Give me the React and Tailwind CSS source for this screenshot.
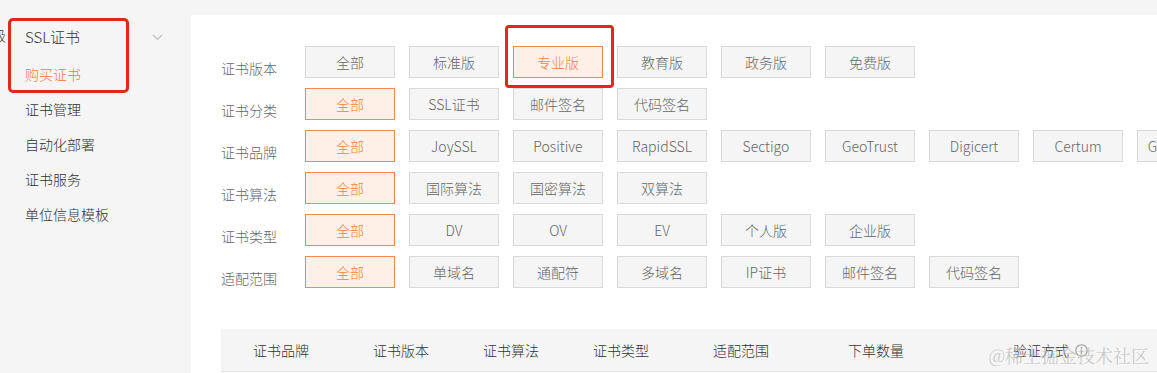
import React from "react";

const FONT = { fontFamily: '"Noto Sans CJK SC", "Noto Sans", sans-serif' };

const rows = [
  { label: "证书版本", items: ["全部", "标准版", "专业版", "教育版", "政务版", "免费版"], active: 2 },
  { label: "证书分类", items: ["全部", "SSL证书", "邮件签名", "代码签名"], active: 0 },
  { label: "证书品牌", items: ["全部", "JoySSL", "Positive", "RapidSSL", "Sectigo", "GeoTrust", "Digicert", "Certum", "GlobalSign"], active: 0 },
  { label: "证书算法", items: ["全部", "国际算法", "国密算法", "双算法"], active: 0 },
  { label: "证书类型", items: ["全部", "DV", "OV", "EV", "个人版", "企业版"], active: 0 },
  { label: "适配范围", items: ["全部", "单域名", "通配符", "多域名", "IP证书", "邮件签名", "代码签名"], active: 0 },
];

const headers = [
  { t: "证书品牌", w: "w-[120px]" },
  { t: "证书版本", w: "w-[110px]" },
  { t: "证书算法", w: "w-[110px]" },
  { t: "证书类型", w: "w-[120px]" },
  { t: "适配范围", w: "w-[135px]" },
  { t: "下单数量", w: "w-[165px]" },
];

function Btn({ text, active, highlight }) {
  return (
    <div className="relative shrink-0">
      <div
        className={
          "w-[90px] h-[32px] flex items-center justify-center text-[14px] font-light border " +
          (active
            ? "bg-[#fff0e7] border-[#f0894c] text-[#f5813f]"
            : "bg-[#f5f5f5] border-[#d9d9d9] text-[#666666]")
        }
      >
        {text}
      </div>
      {highlight && (
        <div className="absolute left-[-8px] top-[-21px] w-[109px] h-[63px] border-[3px] border-[#e5261d] rounded-[4px] pointer-events-none" />
      )}
    </div>
  );
}

export default function App() {
  return (
    <div className="w-[1157px] h-[373px] flex bg-[#f5f5f5] overflow-hidden relative font-light" style={FONT}>
      {/* Sidebar */}
      <div className="w-[191px] shrink-0 flex">
        <div className="w-[6px] overflow-hidden flex justify-end pt-[26px]">
          <span className="text-[14px] leading-[18px] text-[#333] shrink-0">级</span>
        </div>
        <div className="relative flex-1 pt-[19px]">
          <div className="h-[37px] flex items-center pl-[19px] pr-[28px] justify-between">
            <span className="text-[15px] text-[#333]">SSL证书</span>
            <svg width="11" height="7" viewBox="0 0 11 7" fill="none">
              <path d="M1 1l4.5 4.5L10 1" stroke="#c0c0c0" strokeWidth="1.2" />
            </svg>
          </div>
          <div className="h-[36px] flex items-center pl-[19px] text-[14px] text-[#f5793b]">购买证书</div>
          {["证书管理", "自动化部署", "证书服务", "单位信息模板"].map((t) => (
            <div key={t} className="h-[35px] flex items-center pl-[19px] text-[14px] text-[#333]">
              {t}
            </div>
          ))}
          <div className="absolute left-[2px] top-[18px] w-[121px] h-[75px] border-[3px] border-[#e5261d] rounded-[5px] pointer-events-none" />
        </div>
      </div>

      {/* Main */}
      <div className="flex-1 pt-[15px] min-w-0">
        <div className="bg-white h-full pl-[30px] pt-[31px] overflow-hidden">
          <div className="flex flex-col gap-[10px]">
            {rows.map((r) => (
              <div key={r.label} className="flex items-start">
                <div className="w-[84px] shrink-0 pt-[12px] text-[14px] leading-[20px] text-[#666]">{r.label}</div>
                <div className="flex gap-[14px] flex-nowrap">
                  {r.items.map((it, i) => (
                    <Btn key={it + i} text={it} active={i === r.active} highlight={r.label === "证书版本" && i === 2} />
                  ))}
                </div>
              </div>
            ))}
          </div>

          <div className="mt-[41px] h-[43px] bg-[#f5f5f5] border-b border-[#e6e6e6] flex items-center pl-[32px] text-[14px] text-[#333] whitespace-nowrap">
            {headers.map((h) => (
              <div key={h.t} className={h.w + " shrink-0"}>
                {h.t}
              </div>
            ))}
            <div className="flex items-center gap-[6px] shrink-0">
              <span>验证方式</span>
              <svg width="13" height="13" viewBox="0 0 13 13" fill="none">
                <circle cx="6.5" cy="6.5" r="5.7" stroke="#999" strokeWidth="1.1" />
                <path d="M6.5 5.6v3.8" stroke="#999" strokeWidth="1.2" />
                <circle cx="6.5" cy="3.8" r="0.7" fill="#999" />
              </svg>
            </div>
          </div>
        </div>
      </div>

      <div
        className="absolute right-[8px] bottom-[7px] text-[18px] leading-[22px] text-[#b8b8b8]/80 pointer-events-none whitespace-nowrap"
        style={{ fontFamily: '"Noto Serif CJK SC", "Noto Sans CJK SC", serif' }}
      >
        @稀土掘金技术社区
      </div>
    </div>
  );
}
